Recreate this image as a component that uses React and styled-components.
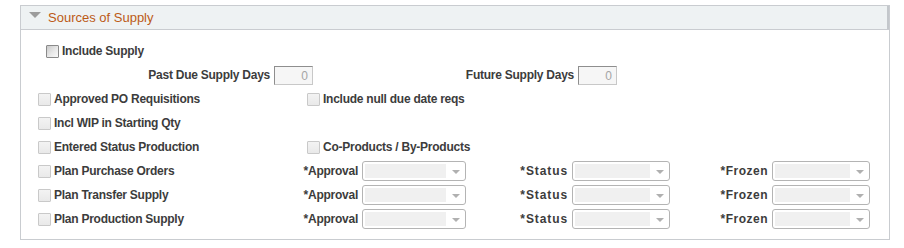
import styled, { createGlobalStyle } from "styled-components";

const GlobalStyle = createGlobalStyle`
  body {
    margin: 0;
    background: #fff;
    font-family: "Liberation Sans", Arial, sans-serif;
  }
`;

const LEFT_ITEMS = [
  "Approved PO Requisitions",
  "Incl WIP in Starting Qty",
  "Entered Status Production",
];

const PLAN_ROWS = ["Plan Purchase Orders", "Plan Transfer Supply", "Plan Production Supply"];

export default function App() {
  return (
    <Page>
      <GlobalStyle />
      <Panel>
        <Header>
          <Caret />
          <Title>Sources of Supply</Title>
        </Header>
        <Body>
          <Row $indent={8}>
            <CheckItem label="Include Supply" enabled />
          </Row>
          <Row>
            <FieldLabel $width={232}>Past Due Supply Days</FieldLabel>
            <NumberBox>0</NumberBox>
            <FieldLabel $width={261}>Future Supply Days</FieldLabel>
            <NumberBox>0</NumberBox>
          </Row>
          <Grid>
            <CheckItem label={LEFT_ITEMS[0]} />
            <Cell $pad={4}>
              <CheckItem label="Include null due date reqs" />
            </Cell>
            <Cell />
            <Cell />

            <CheckItem label={LEFT_ITEMS[1]} />
            <Cell />
            <Cell />
            <Cell />

            <CheckItem label={LEFT_ITEMS[2]} />
            <Cell $pad={4}>
              <CheckItem label="Co-Products / By-Products" />
            </Cell>
            <Cell />
            <Cell />

            {PLAN_ROWS.map((name) => (
              <PlanRow key={name} name={name} />
            ))}
          </Grid>
        </Body>
      </Panel>
    </Page>
  );
}

function PlanRow({ name }) {
  return (
    <>
      <CheckItem label={name} />
      <SelectField label="*Approval" width={104} />
      <SelectField label="*Status" width={98} spacing={0.9} />
      <SelectField label="*Frozen" width={98} spacing={0.5} />
    </>
  );
}

function CheckItem({ label, enabled }) {
  return (
    <Check>
      <Box $enabled={enabled} />
      <CheckText>{label}</CheckText>
    </Check>
  );
}

function SelectField({ label, width, spacing = -0.25 }) {
  return (
    <SelectWrap>
      <FieldText $spacing={spacing}>{label}</FieldText>
      <Select style={{ width }}>
        <SelectFill />
        <Arrow />
      </Select>
    </SelectWrap>
  );
}

const Page = styled.div`
  padding: 5px 0 0 20px;
`;

const Panel = styled.div`
  width: 868px;
  border: 1px solid #c9ccd0;
`;

const Header = styled.div`
  height: 23px;
  display: flex;
  align-items: center;
  padding-left: 8px;
  background: #eef2f3;
  border-bottom: 1px solid #c9ccd0;
  box-shadow: inset -2px 0 0 #c3c7cb;
`;

const Caret = styled.span`
  width: 0;
  height: 0;
  border-left: 6px solid transparent;
  border-right: 6px solid transparent;
  border-top: 6px solid #9c9c9c;
  margin-top: -5px;
  margin-right: 7px;
`;

const Title = styled.span`
  font-size: 13px;
  color: #bc5a16;
`;

const Body = styled.div`
  padding: 9px 0 8px 17px;
`;

const Row = styled.div`
  height: 24px;
  display: flex;
  align-items: center;
  padding-left: ${(p) => p.$indent || 0}px;
`;

const boldText = `
  font-size: 12px;
  font-weight: bold;
  letter-spacing: -0.25px;
  color: #3c3c3c;
  white-space: nowrap;
`;

const FieldLabel = styled.span`
  ${boldText}
  width: ${(p) => p.$width}px;
  text-align: right;
  margin-right: 4px;
`;

const NumberBox = styled.div`
  width: 39px;
  height: 19px;
  box-sizing: border-box;
  border: 1px solid #c8c8c8;
  border-top-color: #8e8e8e;
  border-left-color: #8e8e8e;
  background: #f6f6f6;
  color: #a5a5a5;
  font-size: 12px;
  text-align: right;
  padding: 2px 4px 0 0;
`;

const Grid = styled.div`
  display: grid;
  grid-template-columns: 265px 163px 204px 200px;
  grid-auto-rows: 24px;
  align-items: center;
`;

const Cell = styled.div`
  padding-left: ${(p) => p.$pad || 0}px;
`;

const Check = styled.label`
  display: flex;
  align-items: center;
`;

const Box = styled.span`
  width: 13px;
  height: 13px;
  flex: none;
  box-sizing: border-box;
  margin-right: 3px;
  border: 1px solid ${(p) => (p.$enabled ? "#8a8a8a" : "#c9c9c9")};
  border-radius: 1px;
  background: ${(p) =>
    p.$enabled
      ? "linear-gradient(135deg, #c9c9c9 0%, #e9e9e9 55%, #fafafa 100%)"
      : "linear-gradient(180deg, #f3f3f3, #e9e9e9)"};
`;

const CheckText = styled.span`
  ${boldText}
`;

const SelectWrap = styled.div`
  display: flex;
  align-items: center;
  justify-content: flex-end;
`;

const FieldText = styled.span`
  ${boldText}
  margin-right: 4px;
  letter-spacing: ${(p) => p.$spacing}px;
`;

const Select = styled.div`
  height: 20px;
  box-sizing: border-box;
  border: 1px solid #b4b4b4;
  border-radius: 3px;
  background: #fff;
  display: flex;
  align-items: center;
  padding: 0 5px 0 2px;
`;

const SelectFill = styled.div`
  flex: 1;
  height: 14px;
  margin-right: 6px;
  background: #f0f0f0;
`;

const Arrow = styled.span`
  width: 0;
  height: 0;
  margin-top: 2px;
  border-left: 4px solid transparent;
  border-right: 4px solid transparent;
  border-top: 4px solid #b0b0b0;
`;
